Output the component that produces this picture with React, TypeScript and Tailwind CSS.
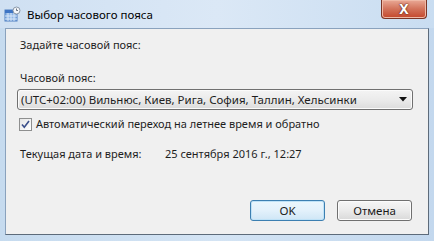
import React from "react";

function TitleIcon() {
  return (
    <svg width="17" height="17" viewBox="0 0 17 17">
      <rect x="1" y="4" width="12" height="11" fill="#8fb6e6" stroke="#4f7fc0" strokeWidth="1" />
      <rect x="1" y="4" width="12" height="3" fill="#3d74c4" />
      <path d="M4 7v8M7 7v8M10 7v8M1 10h12M1 13h12" stroke="#d7e6f7" strokeWidth="1" />
      <circle cx="12.5" cy="4.5" r="3.5" fill="#f4f7fb" stroke="#8a98a8" strokeWidth="1" />
      <path d="M12.5 2.5v2h1.5" stroke="#4a5564" strokeWidth="0.8" fill="none" />
    </svg>
  );
}

function Button({ label, primary }: { label: string; primary?: boolean }) {
  return (
    <div
      className={`flex h-[21px] w-[75px] items-center justify-center rounded-[3px] border text-[11.5px] text-[#1a1a1a] ${
        primary
          ? "border-[#3c7fb1] bg-gradient-to-b from-[#eaf6fd] via-[#e3f1fb] to-[#cfe6f6] shadow-[inset_0_0_0_1px_#bfe2f7]"
          : "border-[#707070] bg-gradient-to-b from-[#f6f6f6] via-[#ebebeb] to-[#d9d9d9] shadow-[inset_0_0_0_1px_#fcfcfc]"
      }`}
    >
      {label}
    </div>
  );
}

export default function App() {
  return (
    <div
      className="flex h-[241px] w-[434px] flex-col bg-gradient-to-r from-[#c6dbef] via-[#d4e4f4] to-[#c3d8ee] text-[#1e1e1e]"
      style={{ fontFamily: '"Noto Sans", "Open Sans", sans-serif' }}
    >
      {/* title bar */}
      <div className="flex h-[28px] items-start justify-between bg-gradient-to-r from-[#cfe0f2] via-[#dbe8f6] to-[#c9ddf1]">
        <div className="flex items-center gap-[6px] pl-[4px] pt-[6px]">
          <TitleIcon />
          <span className="text-[11.5px] leading-[16px] text-black">Выбор часового пояса</span>
        </div>
        <div className="mr-[7px] flex h-[19px] w-[46px] items-center justify-center rounded-b-[4px] border border-t-0 border-[#7a3526] bg-gradient-to-b from-[#e9a996] via-[#d2725a] to-[#c4462a] shadow-[inset_0_0_0_1px_#efb9a6]">
          <span
            className="text-[14px] font-bold leading-none text-white"
            style={{ textShadow: "0 0 2px #5a1d10, 0 0 1px #5a1d10" }}
          >
            X
          </span>
        </div>
      </div>

      {/* client area */}
      <div className="mx-[5px] mb-[6px] flex flex-1 flex-col border border-[#8aa2bd] border-b-[#5d6b7a] border-r-[#5d6b7a] bg-[#f0f0f0] px-[11px] pt-[8px] text-[11px] leading-[16px]">
        <div className="pl-[3px]">Задайте часовой пояс:</div>

        <div className="mt-[17px] pl-[3px]">Часовой пояс:</div>

        <div className="mt-[3px] flex h-[21px] w-[396px] items-center justify-between rounded-[3px] border border-[#707070] bg-gradient-to-b from-[#f4f4f4] via-[#ebebeb] to-[#dcdcdc] pl-[3px] pr-[5px] text-[11.5px] shadow-[inset_0_0_0_1px_#fbfbfb]">
          <span>(UTC+02:00) Вильнюс, Киев, Рига, София, Таллин, Хельсинки</span>
          <svg width="8" height="5" viewBox="0 0 8 5">
            <path d="M0 0h8L4 4.5z" fill="#111" />
          </svg>
        </div>

        <div className="mt-[6px] flex items-center gap-[4px] pl-[2px]">
          <div className="flex h-[13px] w-[13px] items-center justify-center border border-[#8e8f8f] bg-gradient-to-br from-[#e6e6e6] to-[#ffffff]">
            <svg width="9" height="9" viewBox="0 0 9 9">
              <path d="M1 4.5l2.3 2.8L8 1" stroke="#3b4f8a" strokeWidth="1.6" fill="none" />
            </svg>
          </div>
          <span>Автоматический переход на летнее время и обратно</span>
        </div>

        <div className="mt-[14px] flex pl-[3px]">
          <span className="w-[145px]">Текущая дата и время:</span>
          <span>25 сентября 2016 г., 12:27</span>
        </div>

        <div className="mt-auto mb-[13px] flex justify-end gap-[12px] pr-[5px]">
          <Button label="OK" primary />
          <Button label="Отмена" />
        </div>
      </div>
    </div>
  );
}
